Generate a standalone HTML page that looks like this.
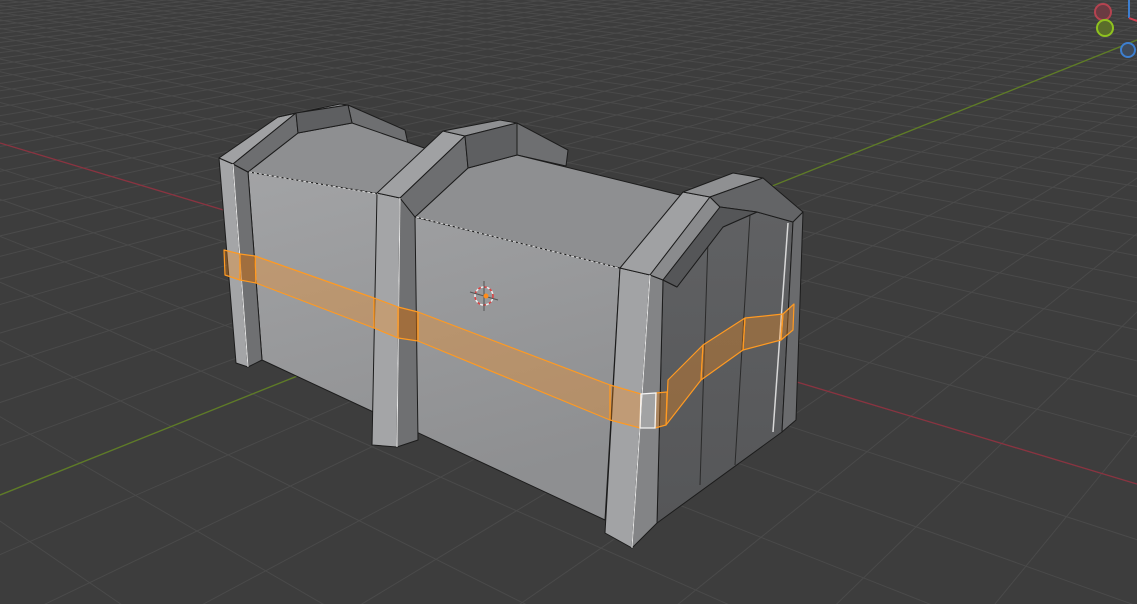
<!DOCTYPE html>
<html><head><meta charset="utf-8"><style>
html,body{margin:0;padding:0;background:#3d3d3d;overflow:hidden;width:1137px;height:604px}
svg{display:block;position:absolute;left:0;top:0;overflow:hidden}
</style></head><body>
<svg id="s" width="1137" height="604" viewBox="0 0 1137 604" xmlns="http://www.w3.org/2000/svg">
<defs>
<clipPath id="cp"><rect width="1137" height="604"/></clipPath>
<linearGradient id="bf" x1="0" y1="0" x2="0.3" y2="1"><stop offset="0" stop-color="#a2a3a5"/><stop offset="1" stop-color="#8e8f91"/></linearGradient>
<linearGradient id="ef" x1="0" y1="0" x2="0" y2="1"><stop offset="0" stop-color="#606163"/><stop offset="1" stop-color="#555658"/></linearGradient>
</defs>
<g clip-path="url(#cp)">
<rect width="1137" height="604" fill="#3d3d3d"/>
<g id="grid" stroke="#4a4a4a" stroke-width="1" fill="none"></g>
<line x1="0" y1="143" x2="1137" y2="484" stroke="#8a3340" stroke-width="1.3"/>
<line x1="0" y1="495" x2="1137" y2="40" stroke="#5f7d25" stroke-width="1.3"/>

<g stroke="#1c1c1c" stroke-width="1" stroke-linejoin="round">
<polygon points="348,105 405,130 410,153 352,123" fill="#6e6f71"/>
<polygon points="517,123 568,150 566,166 517,155" fill="#6e6f71"/>
<polygon points="248,172 298,133 352,123 430,150 380,194" fill="#8e8f91"/>
<polygon points="248,172 380,194 415,217 620,268 605,520 262,360" fill="url(#bf)"/>
<polygon points="415,217 468,168 517,155 700,200 620,268" fill="#8e8f91"/>
<polygon points="219,158 233,164 248,367 236,363" fill="#a4a5a7"/>
<polygon points="233,164 248,172 262,360 248,367" fill="#6f7072"/>
<polygon points="219,158 278,117 296,113 233,164" fill="#a0a1a3"/>
<polygon points="233,164 296,113 298,133 248,172" fill="#6d6e70"/>
<polygon points="278,117 340,104 348,105 296,113" fill="#8f9092"/>
<polygon points="296,113 348,105 352,123 298,133" fill="#5e5f61"/>
<polygon points="377,193 400,198 397,447 372,445" fill="#a4a5a7"/>
<polygon points="400,198 415,217 418,440 397,447" fill="#6f7072"/>
<polygon points="377,193 443,131 465,136 400,198" fill="#a0a1a3"/>
<polygon points="400,198 465,136 468,168 415,217" fill="#6d6e70"/>
<polygon points="443,131 500,120 517,123 465,136" fill="#8f9092"/>
<polygon points="465,136 517,123 517,155 468,168" fill="#5e5f61"/>
<polygon points="663,280 677,287 723,227 757,212 793,222 782,432 657,523" fill="url(#ef)"/>
<line x1="708" y1="240" x2="700" y2="485" stroke="#2a2a2a"/>
<line x1="750" y1="215" x2="735" y2="465" stroke="#2a2a2a"/>
<line x1="788" y1="223" x2="773" y2="432" stroke="#d8d8d8" stroke-width="1.5"/>
<polygon points="620,268 650,275 632,548 605,533" fill="#a2a3a5"/>
<polygon points="650,275 663,280 657,523 632,548" fill="#838486"/>
<polygon points="620,268 683,192 710,197 650,275" fill="#a0a1a3"/>
<polygon points="650,275 710,197 720,207 663,280" fill="#8a8b8d"/>
<polygon points="683,192 733,173 763,178 710,197" fill="#8f9092"/>
<polygon points="710,197 763,178 803,212 793,222 757,212 720,207" fill="#636466"/>
<polygon points="663,280 720,207 757,212 723,227 677,287" fill="#555658"/>
<polygon points="793,222 803,212 796,420 782,432" fill="#6a6b6d"/>
</g>
<g stroke="#e8e8e8" stroke-width="1">
<line x1="650" y1="275" x2="632" y2="548"/>
<line x1="400" y1="198" x2="397" y2="447"/>
<line x1="233" y1="164" x2="248" y2="367"/>
<line x1="416" y1="217" x2="619" y2="268" stroke-dasharray="3 2" stroke="#d8d8d8"/>
<line x1="249" y1="172" x2="378" y2="194" stroke-dasharray="3 2" stroke="#d8d8d8"/>
</g>

<g fill="rgba(255,140,20,0.32)" stroke="#ff9a22" stroke-width="1.2" stroke-linejoin="round">
<polygon points="224,250 240,254 240,280 225,275"/>
<polygon points="240,254 255,256 256,283 240,280" fill="rgba(200,110,20,0.55)"/>
<polygon points="255,256 374,298 374,328 256,283"/>
<polygon points="374,298 398,307 398,338 374,328"/>
<polygon points="398,307 418,312 418,341 398,338" fill="rgba(200,110,20,0.55)"/>
<polygon points="418,312 610,385 610,420 418,341"/>
<polygon points="610,385 641,394 640,428 610,420"/>
<polygon points="656,393 667,392 666,425 655,428"/>
<polygon points="668,380 703,345 701,380 666,425"/>
<polygon points="703,345 745,318 743,350 701,380"/>
<polygon points="745,318 783,314 781,340 743,350"/>
<polygon points="783,314 794,304 793,330 781,340"/>
</g>
<polygon points="641,394 656,393 655,428 640,428" fill="rgba(220,220,220,0.35)" stroke="#f4f4f4" stroke-width="1.3"/>

<g>
<circle cx="484" cy="296" r="9" fill="none" stroke="#e04040" stroke-width="1.5" stroke-dasharray="3 3"/>
<circle cx="484" cy="296" r="9" fill="none" stroke="#eeeeee" stroke-width="1.5" stroke-dasharray="3 3" stroke-dashoffset="3"/>
<line x1="484" y1="281" x2="484" y2="311" stroke="#555" stroke-width="1"/>
<line x1="470" y1="292" x2="498" y2="300" stroke="#555" stroke-width="1"/>
<circle cx="486" cy="296" r="2.5" fill="#ff8c1a"/>
</g>

<line x1="1129" y1="0" x2="1129" y2="18" stroke="#3d7fd0" stroke-width="2"/>
<line x1="1129" y1="18" x2="1137" y2="21" stroke="#d04050" stroke-width="2"/>
<circle cx="1103" cy="12" r="8" fill="#6b3b42" stroke="#b54350" stroke-width="2"/>
<circle cx="1105" cy="28" r="8" fill="#5a6e2a" stroke="#8fc21f" stroke-width="2"/>
<circle cx="1128" cy="50" r="7" fill="#3e4a5a" stroke="#3d7fd0" stroke-width="2"/>
</g>
</svg>
<script>
(function(){
var g=document.getElementById('grid');
var O=[503,294],VA=[-977,-150],VB=[1612,-150],kx=0.036,ky=0.046;
function P(X,Y){var w=1+kx*X+ky*Y;return [(O[0]+kx*X*VA[0]+ky*Y*VB[0])/w,(O[1]+kx*X*VA[1]+ky*Y*VB[1])/w];}
var s='';
for(var i=-60;i<=400;i++){
 var y0=(0.03-1-kx*i)/ky, y1=2000;
 var a=P(i,y0),b=P(i,y1);
 s+='<line x1="'+a[0].toFixed(1)+'" y1="'+a[1].toFixed(1)+'" x2="'+b[0].toFixed(1)+'" y2="'+b[1].toFixed(1)+'"/>';
 var x0=(0.03-1-ky*i)/kx;
 a=P(x0,i);b=P(2000,i);
 s+='<line x1="'+a[0].toFixed(1)+'" y1="'+a[1].toFixed(1)+'" x2="'+b[0].toFixed(1)+'" y2="'+b[1].toFixed(1)+'"/>';
}
g.innerHTML=s;
})();
</script>
</body></html>
